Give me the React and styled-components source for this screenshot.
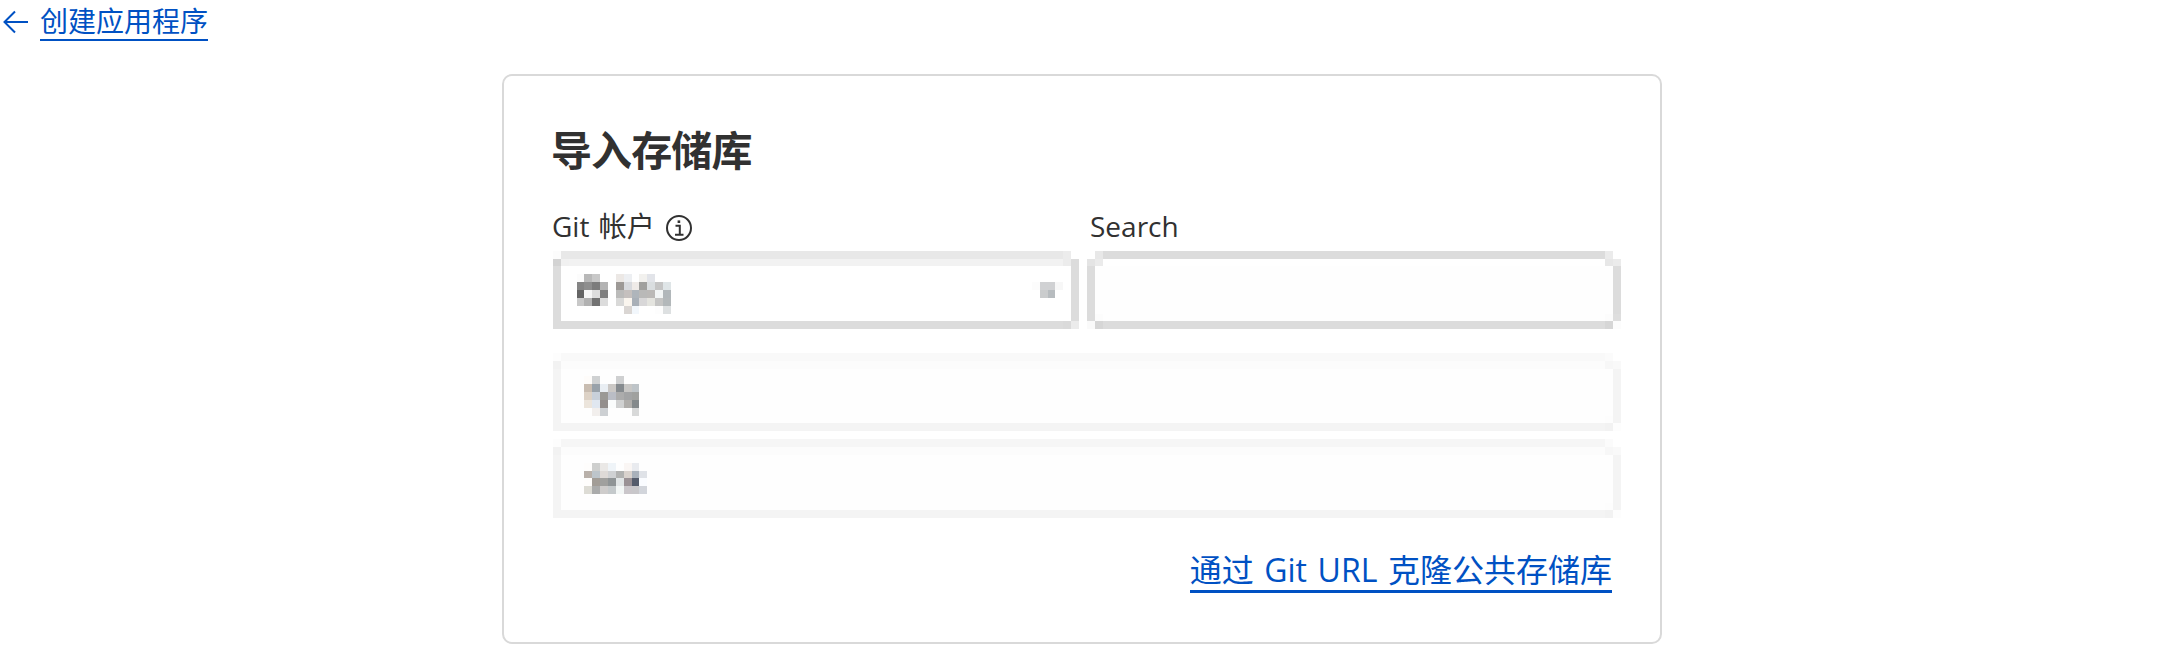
import React from "react";
import styled, { createGlobalStyle } from "styled-components";

const Global = createGlobalStyle`
  * { box-sizing: border-box; }
  body {
    margin: 0;
    background: #fff;
    color: #313131;
    font-family: "Open Sans", "Noto Sans CJK SC", sans-serif;
    font-size: 28px;
  }
`;

const Page = styled.main`
  height: 645px;
  display: flex;
  flex-direction: column;
  align-items: center;
  overflow: hidden;
`;

const BackBar = styled.nav`
  align-self: stretch;
  height: 74px;
  display: flex;
  align-items: flex-start;
  padding: 3px 0 0 3px;
  color: #0051c3;
`;

const BackArrow = styled.svg`
  width: 25px;
  height: 24px;
  margin: 7px 12px 0 0;
  flex: none;
`;

const Link = styled.a`
  display: block;
  color: #0051c3;
  text-decoration: none;
  white-space: nowrap;
  font-size: ${(p) => p.$size}px;
  line-height: ${(p) => p.$line}px;
  height: ${(p) => p.$height}px;
  border-bottom: ${(p) => p.$rule}px solid #0051c3;
  word-spacing: ${(p) => p.$spacing || 0}px;
`;

const Card = styled.section`
  width: 1160px;
  height: 570px;
  flex: none;
  border: 2px solid #d9d9d9;
  border-radius: 10px;
  padding: 46px 39px 0 49px;
  display: flex;
  flex-direction: column;
`;

const Title = styled.h1`
  margin: 0 0 0 -2px;
  font-size: 41px;
  letter-spacing: -0.9px;
  font-weight: 700;
  line-height: 56px;
  height: 85px;
`;

const Fields = styled.div`
  display: grid;
  grid-template-columns: 526px 534px;
  column-gap: 8px;
  margin-bottom: 24px;
`;

const Label = styled.div`
  display: flex;
  align-items: center;
  height: 44px;
  line-height: 36px;
  padding: 0 0 4px ${(p) => p.$indent || 0}px;
`;

const LabelText = styled.span`
  margin: -2px 0 0 ${(p) => p.$shift || 0}px;
  word-spacing: ${(p) => p.$spacing || 0}px;
`;

const InfoIcon = styled.svg`
  width: 28px;
  height: 28px;
  margin: 2px 0 0 10px;
`;

const Frame = styled.div`
  display: grid;
  grid-template-columns: 8px 8px 1fr 8px 8px;
  grid-template-rows: 8px ${(p) => p.$second}px 1fr 7px 8px;
  height: ${(p) => p.$height}px;
`;

const Cell = styled.i`
  background: ${(p) => p.$c};
`;

const FrameBody = styled.div`
  grid-area: 3 / 2 / 4 / 5;
  display: flex;
  align-items: flex-start;
  padding: ${(p) => p.$pad};
`;

const Mosaic = styled.div`
  display: grid;
  grid-template-columns: ${(p) => p.$cols};
  grid-template-rows: ${(p) => p.$rows};
  margin: ${(p) => p.$margin || 0};
`;

const Rows = styled.div`
  display: grid;
  row-gap: 8px;
`;

const Footer = styled.footer`
  display: flex;
  justify-content: flex-end;
  padding: 27px 9px 0 0;
`;

const W = "#fff";
const px = (s) => s.split(" ").map((n) => n + "px").join(" ");

const Pixels = ({ colors, cols, rows, margin }) => (
  <Mosaic $cols={px(cols)} $rows={px(rows)} $margin={margin}>
    {colors.flatMap((line, r) =>
      line.split(" ").map((c, i) => <Cell key={`${r}-${i}`} $c={"#" + c} />)
    )}
  </Mosaic>
);

const PixelFrame = ({ colors, height, second, pad, children }) => (
  <Frame $height={height} $second={second}>
    {colors.flatMap((line, r) =>
      line.map((c, i) => (
        <Cell key={`${r}-${i}`} $c={c} style={{ gridArea: `${r + 1} / ${i + 1}` }} />
      ))
    )}
    {children && <FrameBody $pad={pad}>{children}</FrameBody>}
  </Frame>
);

const D = "#dcdcdc";
const selectFrame = [
  ["#fcfcfc", "#e8e8e8", "#e8e8e8", "#ececec", W],
  ["#d3d3d3", "#f1f1f1", "#f2f2f2", "#ececec", D],
  [D, W, W, W, D],
  [D, W, W, W, D],
  [D, D, D, "#dadada", "#ebebeb"],
];
const searchFrame = [
  [W, "#e8e8e8", D, "#ebebeb", W],
  ["#e4e4e4", "#ebebeb", W, "#e7e7e7", "#ebebeb"],
  [D, "#fefefe", "#fefefe", "#fefefe", D],
  [D, "#fcfcfc", "#fefefe", "#fcfcfc", "#dedede"],
  ["#fafafa", "#d6d6d6", D, "#d6d6d6", "#fcfcfc"],
];
const L = "#f4f4f4";
const rowFrame = (top) => [
  ["#fdfdfd", top, top, "#fbfbfb", W],
  ["#f2f2f2", "#fcfcfc", "#fcfcfc", "#f7f7f7", "#f9f9f9"],
  [L, "#fefefe", "#fefefe", "#fefefe", L],
  [L, "#fefefe", "#fefefe", "#fdfdfd", L],
  [L, L, L, "#f2f2f2", "#fdfdfd"],
];

export default function App() {
  return (
    <>
      <Global />
      <Page>
        <BackBar>
          <BackArrow viewBox="0 0 25 24" fill="none" stroke="currentColor" strokeWidth="2">
            <path d="M25 12H1.5M12 1.5 1.5 12 12 22.5" />
          </BackArrow>
          <Link $size={28} $line={36} $height={38} $rule={2}>创建应用程序</Link>
        </BackBar>
        <Card>
          <Title>导入存储库</Title>
          <Fields>
            <Label>
              <LabelText $shift={-1} $spacing={2}>Git 帐户</LabelText>
              <InfoIcon viewBox="0 0 28 28" fill="none" stroke="#313131" strokeWidth="2">
                <circle cx="14" cy="14" r="12" />
                <path d="M10.5 11.8H14.8V20.5M10 20.8H18.5" />
                <path d="M12.6 7.7H15.2" strokeWidth="2.6" />
              </InfoIcon>
            </Label>
            <Label $indent={3}>
              <LabelText>Search</LabelText>
            </Label>
            <PixelFrame colors={selectFrame} height={78} second={7} pad="8px 8px 0 16px">
              <Pixels
                cols="7 8 8 8"
                rows="8 8 8 8"
                colors={[
                  "fcfcfc b8b8b8 c8c8c8 ffffff",
                  "858585 8e8e8e 7c7c7c b3b3b3",
                  "646464 f6f6f6 dddddd 7f7f7f",
                  "c8c8c8 b1b1b1 727272 dcdcdc",
                ]}
              />
              <Pixels
                margin="0 0 0 8px"
                cols="8 8 7 8 8 8 8"
                rows="8 8 8 8 8"
                colors={[
                  "ece8e5 edeff2 ffffff f2f1ee e2e4e9 ffffff ffffff",
                  "9d9996 d8dade efebe8 a0a09e dadee0 c5c5c5 dfe5e7",
                  "bbbbba c5c0be afb5bb b9b9b8 bbb9b7 f2f5f5 b1b7ba",
                  "d9d9d8 faf5ee a9b0b8 d8d7d8 e4e4df c5c5c4 b3b8ba",
                  "ffffff dad6d3 f2f7fc ffffff ffffff fdfdfd dde0e1",
                ]}
              />
              <Pixels
                margin="8px 0 0 auto"
                cols="8 8 7 8"
                rows="8 8"
                colors={["fcfcfc d0d1d3 d0d1d3 f7f7f7", "ffffff cacccd b7bcbf ffffff"]}
              />
            </PixelFrame>
            <PixelFrame colors={searchFrame} height={78} second={7} />
          </Fields>
          <Rows>
            <PixelFrame colors={rowFrame("#f9f9f9")} height={78} second={8} pad="7px 0 0 23px">
              <Pixels
                cols="8 8 8 8 8 8 7"
                rows="8 8 8 8 8"
                colors={[
                  "fefcfa cfd1d2 fefefe fefefe cfd0d1 fefefe fefefe",
                  "c9bdb1 99a2aa e9eef3 cbc8c5 868b8f c8c7c5 bec4c8",
                  "ddd2c6 c8d0da 9b9995 babdc5 acacac a3a4a5 a0a19f",
                  "ece5dc e0e7f0 938e8c fafcfc d0d1d1 b0aeab 84898b",
                  "fefefe f2efed cdd0d3 fefefe fefefe fefefe d8d9d9",
                ]}
              />
            </PixelFrame>
            <PixelFrame colors={rowFrame("#f6f6f6")} height={79} second={8} pad="8px 0 0 23px">
              <Pixels
                cols="8 8 8 8 8 8 7 8"
                rows="8 7 8 8"
                colors={[
                  "fefdfc cecfce eae8e6 eff4f8 fefefe faf6f4 e9ebef fefefe",
                  "b9b1aa bdc5cb dedad7 cfd1d3 b1b2b1 d9d2cd a9b1bb dfe2e7",
                  "fefdfc a29d97 a0a09e 8f9496 e1e5e6 9a9195 555c6c fafcff",
                  "dddcd5 aaabab cecccb c4c9cb f3f7f6 cac6ca c8c7ca d2d5db",
                ]}
              />
            </PixelFrame>
          </Rows>
          <Footer>
            <Link $size={32} $line={49} $height={48} $rule={3} $spacing={2.3}>
              通过 Git URL 克隆公共存储库
            </Link>
          </Footer>
        </Card>
      </Page>
    </>
  );
}
